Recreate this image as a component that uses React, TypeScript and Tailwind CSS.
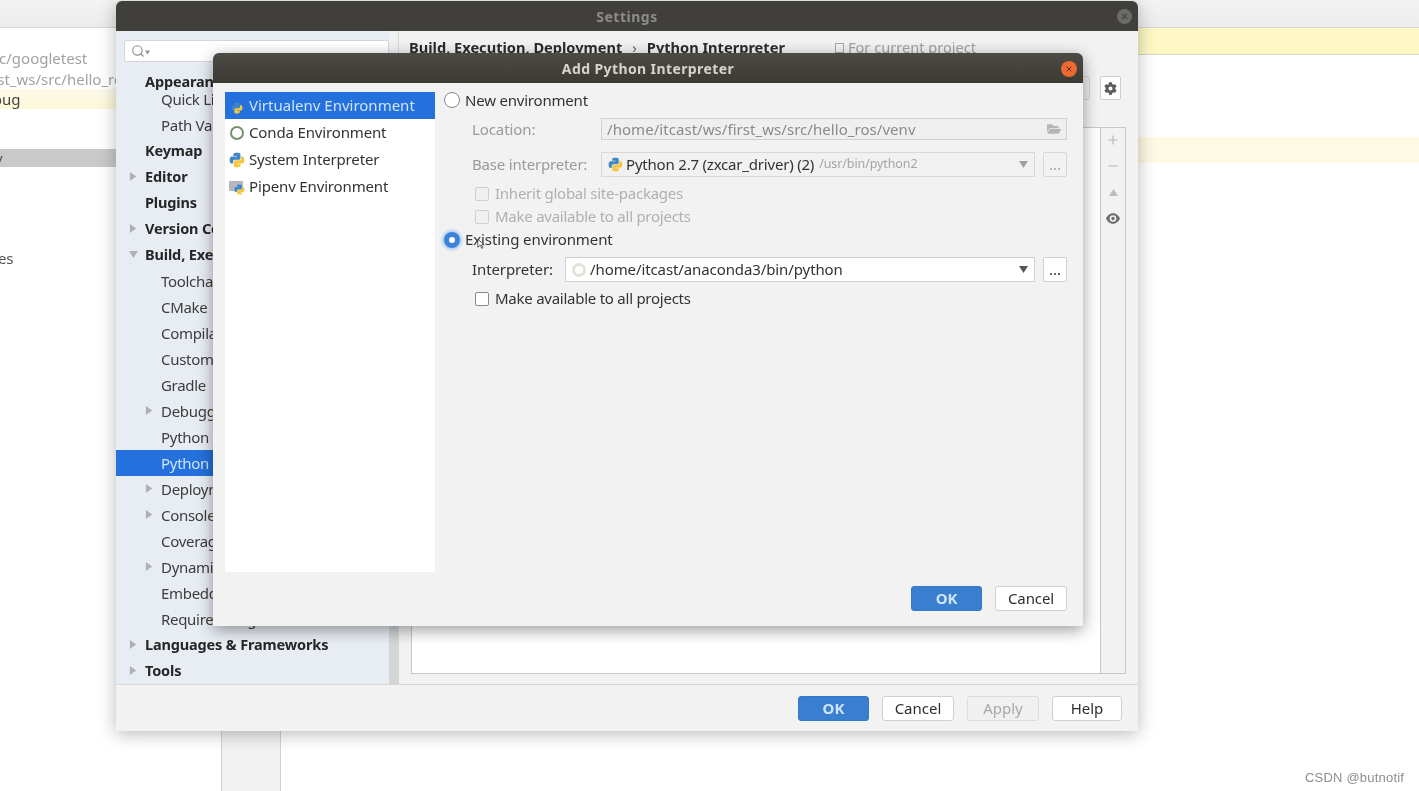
import { FaCog, FaFolderOpen } from 'react-icons/fa';
import { Minus, Plus, Search, X } from 'lucide-react';

function PythonIcon({ className = 'w-4 h-4' }: { className?: string }) {
  return (
    <svg viewBox="0 0 24 24" className={className}>
      <path fill="#3f87c6" d="M11.9 1C6.3 1 6.6 3.4 6.6 3.4V6h5.4v.8H4.5S1 6.4 1 12s3.1 5.4 3.1 5.4H6v-2.6s-.1-3.1 3-3.1h5.3s2.9 0 2.9-2.8V3.7S17.6 1 11.9 1z" />
      <path fill="#f5c842" d="M12.1 23c5.6 0 5.3-2.4 5.3-2.4V18H12v-.8h7.5s3.5.4 3.5-5.2-3.1-5.4-3.1-5.4H18v2.6s.1 3.1-3 3.1H9.7s-2.9 0-2.9 2.8v5.2S6.4 23 12.1 23z" />
    </svg>
  );
}

function Caret({ dir = 'right', color = '#b0b0b0', className = 'w-[9px] h-[9px]' }: { dir?: 'right' | 'down' | 'up'; color?: string; className?: string }) {
  const points = dir === 'right' ? '1,0 8,5 1,10' : dir === 'down' ? '0,1 10,1 5,9' : '0,9 10,9 5,1';
  return (
    <svg viewBox="0 0 10 10" className={`shrink-0 ${className}`}>
      <polygon points={points} fill={color} />
    </svg>
  );
}

type Row = { label: string; level: 0 | 1; arrow?: 'right' | 'down'; selected?: boolean; tight?: boolean };

const rows: Row[] = [
  { label: 'Appearance & Behavior', level: 0 },
  { label: 'Quick Lists', level: 1, tight: true },
  { label: 'Path Variables', level: 1 },
  { label: 'Keymap', level: 0 },
  { label: 'Editor', level: 0, arrow: 'right' },
  { label: 'Plugins', level: 0 },
  { label: 'Version Control', level: 0, arrow: 'right' },
  { label: 'Build, Execution, Deployment', level: 0, arrow: 'down' },
  { label: 'Toolchains', level: 1 },
  { label: 'CMake', level: 1 },
  { label: 'Compilation Database', level: 1 },
  { label: 'Custom Build Targets', level: 1 },
  { label: 'Gradle', level: 1 },
  { label: 'Debugger', level: 1, arrow: 'right' },
  { label: 'Python Debugger', level: 1 },
  { label: 'Python Interpreter', level: 1, selected: true },
  { label: 'Deployment', level: 1, arrow: 'right' },
  { label: 'Console', level: 1, arrow: 'right' },
  { label: 'Coverage', level: 1 },
  { label: 'Dynamic Analysis Tools', level: 1, arrow: 'right' },
  { label: 'Embedded Development', level: 1 },
  { label: 'Required Plugins', level: 1 },
  { label: 'Languages & Frameworks', level: 0, arrow: 'right' },
  { label: 'Tools', level: 0, arrow: 'right' },
];

function SidebarRow({ row }: { row: Row }) {
  return (
    <div
      className={`relative flex items-center h-[26px] shrink-0 whitespace-nowrap ${row.level === 0 ? 'pl-[29px] font-bold text-[14.500px] tracking-[-0.15px]' : 'pl-[45px] tracking-[-0.3px]'} ${row.selected ? 'bg-[#2470dc] text-[#cfe3fb]' : row.level === 0 ? 'text-[#262626]' : 'text-[#3d3d3d]'} ${row.tight ? '-mt-[9px]' : ''}`}
    >
      {row.arrow && (
        <span className={`absolute top-[8px] ${row.level === 0 ? 'left-[13px]' : 'left-[29px]'}`}>
          <Caret dir={row.arrow} />
        </span>
      )}
      {row.label}
    </div>
  );
}

function EditorBackdrop() {
  return (
    <div className="flex flex-col h-full text-[15px] text-[#a2a2a2]">
      <div className="h-[28px] shrink-0 bg-gradient-to-b from-[#f3f3f3] to-[#ececec] border-b border-[#d6d6d0]" />
      <div className="flex flex-1 min-h-0">
        <div className="w-[116px] shrink-0 overflow-hidden whitespace-nowrap pt-[20px]">
          <div className="h-[20px] leading-[20px] -ml-[14px]">src/googletest</div>
          <div className="h-[20px] leading-[20px] mt-[1px] -ml-[18px]">first_ws/src/hello_ros</div>
          <div className="h-[20px] leading-[20px] bg-gradient-to-b from-[#fdfaeb] to-[#fdf8d6] text-[#444444]">
            <span className="-ml-[25px] inline-block">debug</span>
          </div>
          <div className="h-[18px] mt-[40px] leading-[18px] bg-[#c9c9c9] text-[#555555]">
            <span className="-ml-[5px] inline-block">v</span>
          </div>
          <div className="h-[20px] leading-[20px] mt-[81px] text-[#555555] -ml-[15px]">files</div>
        </div>
        <div className="flex-1 min-w-0">
          <div className="ml-[105px] w-[60px] h-full bg-[#f1f1f1] border-x border-[#d2d2d2]" />
        </div>
        <div className="w-[281px] shrink-0 flex flex-col">
          <div className="h-[27px] shrink-0 bg-[#fdf8c4] border-b border-[#d8d6c0]" />
          <div className="h-[82px] shrink-0" />
          <div className="h-[26px] shrink-0 bg-[#fdf9e3]" />
        </div>
      </div>
    </div>
  );
}

function ToolButton({ label, primary, disabled, className = '' }: { label: string; primary?: boolean; disabled?: boolean; className?: string }) {
  const tone = primary
    ? 'bg-[#3a7fcf] text-[#cfe4f8] font-bold border-[#3478c8]'
    : disabled
      ? 'bg-[#f0f0f0] text-[#a8a8a8] border-[#dcdcdc]'
      : 'bg-white text-[#2e2e2e] border-[#cfcfcf]';
  return <div className={`flex items-center justify-center h-[25px] rounded-[3px] border ${tone} ${className}`}>{label}</div>;
}

function SettingsWindow() {
  return (
    <div className="absolute left-[116px] top-[1px] w-[1022px] h-[730px] flex flex-col rounded-t-[6px] overflow-hidden bg-[#f2f2f2] shadow-[0_3px_18px_rgba(0,0,0,0.28)] text-[15px]">
      <div className="relative flex items-center justify-center h-[30px] shrink-0 bg-[#403f3b] text-[#8d8c87] font-bold text-[14px] tracking-[0.5px]">
        Settings
        <span className="absolute right-[6px] top-[8px] flex items-center justify-center w-[15px] h-[15px] rounded-full bg-[#6b6b67]">
          <X size={9} className="text-[#45453f]" strokeWidth={3} />
        </span>
      </div>

      <div className="flex flex-1 min-h-0">
        <div className="w-[273px] shrink-0 flex flex-col overflow-hidden bg-[#e8edf4]">
          <div className="ml-[8px] mt-[9px] h-[22px] shrink-0 flex items-center pl-[6px] bg-white border border-[#d6d6d6] rounded-[2px]">
            <Search size={14} className="text-[#8f8f8f]" />
            <Caret dir="down" color="#8f8f8f" className="w-[5px] h-[5px] mt-[2px]" />
          </div>
          <div className="flex flex-col mt-[7px]">
            {rows.map((row) => (
              <SidebarRow key={row.label} row={row} />
            ))}
          </div>
        </div>
        <div className="w-[10px] shrink-0 flex flex-col bg-[#f0f1f3] border-r border-[#d8d8d8]">
          <div className="flex-1 mt-[60px] bg-[#d3d5d7]" />
        </div>

        <div className="flex-1 min-w-0 flex flex-col pl-[12px] pr-[12px]">
          <div className="flex items-center h-[22px] mt-[6px] -ml-[2px] text-[14.600px] whitespace-nowrap text-[#2b2b2b]">
            <span className="font-bold">Build, Execution, Deployment</span>
            <span className="mx-[10px] text-[#666666]">›</span>
            <span className="font-bold">Python Interpreter</span>
            <span className="ml-[50px] flex items-center gap-[4px] text-[#a0a0a0]">
              <span className="w-[9px] h-[10px] border border-[#a8a8a8]" />
              For current project
            </span>
          </div>
          <div className="flex items-center h-[24px] mt-[17px] pr-[5px]">
            <div className="flex-1 h-full mr-[10px] border border-[#d4d4d4] rounded-[2px] bg-[#efefef]" />
            <span className="flex items-center justify-center w-[21px] h-[24px] bg-white border border-[#cdcdcd] rounded-[2px]">
              <FaCog size={13} className="text-[#5c5c5c]" />
            </span>
          </div>
          <div className="flex flex-1 mt-[27px] mb-[10px] border border-[#c8c8c8]">
            <div className="flex-1 bg-white" />
            <div className="w-[25px] shrink-0 flex flex-col items-center border-l border-[#c8c8c8] text-[#b3b3b3]">
              <span className="flex items-center justify-center h-[26px] -mt-[1px]"><Plus size={14} /></span>
              <span className="flex items-center justify-center h-[26px]"><Minus size={14} /></span>
              <span className="flex items-center justify-center h-[26px]"><Caret dir="up" color="#bdbdbd" /></span>
              <span className="flex items-center justify-center h-[26px]">
                <svg viewBox="0 0 16 12" className="w-[14px] h-[11px]">
                  <path fill="#6e6e6e" d="M8 0C4 0 1.400 3 0 6c1.400 3 4 6 8 6s6.600-3 8-6c-1.400-3-4-6-8-6zm0 2.200a3.800 3.800 0 1 1 0 7.600 3.800 3.800 0 0 1 0-7.600z" />
                  <circle cx="8" cy="6" r="1.900" fill="#6e6e6e" />
                </svg>
              </span>
            </div>
          </div>
        </div>
      </div>

      <div className="flex justify-end items-start gap-[13px] h-[47px] shrink-0 pt-[11px] pr-[16px] border-t border-[#d8d8d8]">
        <ToolButton label="OK" primary className="w-[71px]" />
        <ToolButton label="Cancel" className="w-[72px]" />
        <ToolButton label="Apply" disabled className="w-[72px]" />
        <ToolButton label="Help" className="w-[70px]" />
      </div>
    </div>
  );
}

function EnvRow({ label, icon, selected }: { label: string; icon: React.ReactNode; selected?: boolean }) {
  return (
    <div className={`flex items-center h-[27px] pl-[4px] gap-[4px] whitespace-nowrap tracking-[-0.15px] ${selected ? 'bg-[#2470dc] text-[#cfe3fb] tracking-normal' : 'text-[#333333]'}`}>
      <span className="relative flex items-center justify-center w-[16px] h-[16px] shrink-0">{icon}</span>
      {label}
    </div>
  );
}

function Radio({ checked }: { checked?: boolean }) {
  if (checked) {
    return (
      <span className="flex items-center justify-center w-[16px] h-[16px] rounded-full bg-[#3d84d8] shadow-[0_0_3px_2px_#a9cdf2] shrink-0">
        <span className="w-[6px] h-[6px] rounded-full bg-white" />
      </span>
    );
  }
  return <span className="w-[16px] h-[16px] rounded-full bg-white border border-[#8a8a8a] shrink-0" />;
}

function Check({ label, disabled }: { label: string; disabled?: boolean }) {
  return (
    <div className={`flex items-center h-[23px] pl-[31px] gap-[6px] tracking-[-0.25px] ${disabled ? 'text-[#b0b0b0]' : 'text-[#333333]'}`}>
      <span className={`w-[14px] h-[14px] rounded-[2px] border shrink-0 ${disabled ? 'border-[#cfcfcf] bg-[#f0f0f0]' : 'border-[#8a8a8a] bg-white'}`} />
      {label}
    </div>
  );
}

function AddInterpreterDialog() {
  return (
    <div className="absolute left-[213px] top-[53px] w-[870px] h-[573px] flex flex-col rounded-t-[6px] overflow-hidden bg-[#f2f2f2] shadow-[0_4px_16px_rgba(0,0,0,0.4)] text-[15px]">
      <div className="relative flex items-center justify-center h-[30px] shrink-0 bg-gradient-to-b from-[#4c4b45] to-[#3a3934] text-[#d6d3cb] font-bold text-[14px] tracking-[0.4px]">
        Add Python Interpreter
        <span className="absolute right-[6px] top-[8px] flex items-center justify-center w-[16px] h-[16px] rounded-full bg-[#ea6a30]">
          <X size={8} className="text-[#6e2a10]" strokeWidth={3} />
        </span>
      </div>

      <div className="flex flex-1 min-h-0">
        <div className="w-[210px] h-[480px] ml-[12px] mt-[9px] shrink-0 bg-white">
          <EnvRow
            selected
            label="Virtualenv Environment"
            icon={<PythonIcon className="absolute left-[2px] top-[4px] w-[12px] h-[12px]" />}
          />
          <EnvRow
            label="Conda Environment"
            icon={<span className="w-[14px] h-[14px] rounded-full border-[2px] border-[#76906a]" />}
          />
          <EnvRow label="System Interpreter" icon={<PythonIcon className="w-[16px] h-[16px]" />} />
          <EnvRow
            label="Pipenv Environment"
            icon={
              <>
                <span className="absolute left-0 top-[2px] w-[14px] h-[10px] bg-[#b4b7c0] rounded-[1px]" />
                <PythonIcon className="absolute left-[5px] top-[5px] w-[11px] h-[11px]" />
              </>
            }
          />
        </div>

        <div className="flex-1 min-w-0 flex flex-col pl-[9px] pr-[16px] pt-[5px] pb-[15px] text-[#333333] whitespace-nowrap tracking-[-0.1px]">
          <div className="flex items-center h-[24px] gap-[5px] tracking-[-0.2px]">
            <Radio />
            New environment
          </div>

          <div className="flex items-center h-[22px] mt-[6px] pl-[28px] text-[#9a9a9a]">
            <span className="w-[129px] shrink-0">Location:</span>
            <div className="flex-1 flex items-center justify-between h-full pl-[5px] pr-[5px] border border-[#d0d0d0] bg-[#efefef] text-[#8a8a8a] tracking-[0.05px]">
              /home/itcast/ws/first_ws/src/hello_ros/venv
              <FaFolderOpen size={14} className="text-[#b5b5b5]" />
            </div>
          </div>

          <div className="flex items-center h-[25px] mt-[12px] pl-[28px] text-[#9a9a9a]">
            <span className="w-[129px] shrink-0 tracking-[-0.2px]">Base interpreter:</span>
            <div className="flex-1 flex items-center h-full pl-[6px] pr-[6px] gap-[3px] border border-[#d8d8d8] bg-[#f1f1f1] text-[#333333]">
              <PythonIcon className="w-[15px] h-[15px] shrink-0" />
              <span className="tracking-[-0.2px]">Python 2.7 (zxcar_driver) (2)</span>
              <span className="ml-[2px] text-[12.500px] text-[#a5a5a5]">/usr/bin/python2</span>
              <span className="ml-auto"><Caret dir="down" color="#a0a0a0" /></span>
            </div>
            <div className="flex items-center justify-center w-[24px] h-full ml-[8px] border border-[#d8d8d8] rounded-[2px] text-[#a5a5a5]">...</div>
          </div>

          <div className="mt-[5px]">
            <Check disabled label="Inherit global site-packages" />
            <Check disabled label="Make available to all projects" />
          </div>

          <div className="flex items-center h-[23px] gap-[5px]">
            <Radio checked />
            Existing environment
          </div>

          <div className="flex items-center h-[25px] mt-[6px] pl-[28px]">
            <span className="w-[93px] shrink-0">Interpreter:</span>
            <div className="flex-1 flex items-center h-full pl-[6px] pr-[6px] gap-[4px] border border-[#d0d0d0] bg-white">
              <span className="w-[14px] h-[14px] rounded-full border-[3px] border-[#e2e2d8] shrink-0" />
              <span>/home/itcast/anaconda3/bin/python</span>
              <span className="ml-auto"><Caret dir="down" color="#555555" /></span>
            </div>
            <div className="flex items-center justify-center w-[24px] h-full ml-[8px] bg-white border border-[#cfcfcf] rounded-[2px]">...</div>
          </div>

          <div className="mt-[5px]">
            <Check label="Make available to all projects" />
          </div>

          <div className="mt-auto flex justify-end gap-[13px]">
            <ToolButton label="OK" primary className="w-[71px]" />
            <ToolButton label="Cancel" className="w-[72px]" />
          </div>
        </div>
      </div>
    </div>
  );
}

export default function App() {
  return (
    <div className="relative w-[1419px] h-[791px] overflow-hidden bg-white blur-[0.5px] font-['Noto_Sans',sans-serif]">
      <EditorBackdrop />
      <SettingsWindow />
      <AddInterpreterDialog />

      {/* mouse pointer over the radio label */}
      <svg viewBox="0 0 10 14" className="absolute left-[477px] top-[238px] w-[8px] h-[12px]">
        <path d="M1 1v10l3-2.500 2 4 1.500-.8-2-3.700h3.500z" fill="#ffffff" stroke="#333333" strokeWidth="1" />
      </svg>

      <div className="absolute left-[1305px] top-[768px] font-['Liberation_Sans',sans-serif] text-[13px] tracking-[0.2px] text-[#8d8d8d]">CSDN @butnotif</div>
    </div>
  );
}
